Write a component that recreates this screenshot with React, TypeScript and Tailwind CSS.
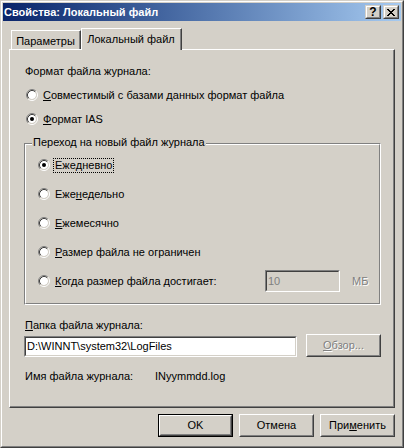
import React from "react";

function Radio({ checked }: { checked?: boolean }) {
  return (
    <svg width="12" height="12" viewBox="0 0 12 12" className="shrink-0 block">
      <circle cx="6" cy="6" r="4" fill="#fff" />
      <path d="M2.11 9.89A5.5 5.5 0 0 1 9.89 2.11" stroke="#808080" fill="none" />
      <path d="M9.89 2.11A5.5 5.5 0 0 1 2.11 9.89" stroke="#fff" fill="none" />
      <path d="M2.82 9.18A4.5 4.5 0 0 1 9.18 2.82" stroke="#404040" fill="none" />
      <path d="M9.18 2.82A4.5 4.5 0 0 1 2.82 9.18" stroke="#D4D0C8" fill="none" />
      {checked && <circle cx="6" cy="6" r="2" fill="#000" />}
    </svg>
  );
}

function Raised({
  className,
  children,
}: {
  className?: string;
  children?: React.ReactNode;
}) {
  return (
    <div
      className={`border border-t-white border-l-white border-r-[#404040] border-b-[#404040] ${className ?? ""}`}
    >
      <div className="h-full w-full border border-t-[#D4D0C8] border-l-[#D4D0C8] border-r-[#808080] border-b-[#808080] flex items-center justify-center">
        {children}
      </div>
    </div>
  );
}

function CapBtn({
  className,
  children,
}: {
  className?: string;
  children?: React.ReactNode;
}) {
  return (
    <div
      className={`w-[16px] h-[14px] bg-[#D4D0C8] border border-t-[#D4D0C8] border-l-[#D4D0C8] border-r-[#404040] border-b-[#404040] ${className ?? ""}`}
    >
      <div className="h-full w-full border border-t-white border-l-white border-r-[#808080] border-b-[#808080] flex items-center justify-center">
        {children}
      </div>
    </div>
  );
}

function Sunken({
  className,
  bg,
  children,
}: {
  className?: string;
  bg: string;
  children?: React.ReactNode;
}) {
  return (
    <div
      className={`border border-t-[#808080] border-l-[#808080] border-r-white border-b-white ${className ?? ""}`}
    >
      <div
        className={`h-full w-full border border-t-[#404040] border-l-[#404040] border-r-[#D4D0C8] border-b-[#D4D0C8] flex items-center pl-px ${bg}`}
      >
        {children}
      </div>
    </div>
  );
}

export default function App() {
  return (
    <div className="w-[404px] h-[448px] bg-[#D4D0C8] border border-t-[#D4D0C8] border-l-[#D4D0C8] border-r-[#404040] border-b-[#404040] text-[11px] leading-[13px] text-black font-['Liberation_Sans',Arial,sans-serif]">
      <div className="h-full border border-t-white border-l-white border-r-[#808080] border-b-[#808080] p-px flex flex-col">
        {/* Title bar */}
        <div className="h-[18px] shrink-0 flex items-center bg-linear-to-r from-[#0A246A] to-[#A6CAF0] pl-px pr-[2px]">
          <span className="flex-1 text-white font-bold whitespace-nowrap">
            Свойства: Локальный файл
          </span>
          <CapBtn>
            <span className="font-bold text-[12px] leading-[10px] text-black">?</span>
          </CapBtn>
          <CapBtn className="ml-[2px]">
            <svg width="8" height="7" viewBox="0 0 8 7" shapeRendering="crispEdges" className="block">
              <path
                fill="#000"
                d="M0 0h2v1H0zM6 0h2v1H6zM1 1h2v1H1zM5 1h2v1H5zM2 2h4v1H2zM3 3h2v1H3zM2 4h4v1H2zM1 5h2v1H1zM5 5h2v1H5zM0 6h2v1H0zM6 6h2v1H6z"
              />
            </svg>
          </CapBtn>
        </div>

        <div className="flex flex-col px-[6px] pt-[7px]">
          {/* Tabs */}
          <div className="flex items-end pl-[2px] h-[21px]">
            <div className="w-[70px] h-[19px] border-t border-l border-r border-t-white border-l-white border-r-[#404040] mb-0">
              <div className="h-full border-r border-r-[#808080] flex justify-center pt-[4px] whitespace-nowrap">
                Параметры
              </div>
            </div>
            <div className="relative z-10 -mb-px w-[101px] h-[22px] bg-[#D4D0C8] border-t border-l border-r border-t-white border-l-white border-r-[#404040]">
              <div className="h-full border-r border-r-[#808080] flex justify-center pt-[4px] whitespace-nowrap">
                Локальный файл
              </div>
            </div>
          </div>

          {/* Panel */}
          <div className="h-[359px] border border-t-white border-l-white border-r-[#404040] border-b-[#404040]">
            <div className="h-full border-r border-b border-r-[#808080] border-b-[#808080] flex flex-col">
              <div className="mt-[13px] h-[16px] pl-[15px] flex items-center">
                Формат файла журнала:
              </div>
              <div className="mt-[8px] h-[16px] pl-[16px] flex items-center">
                <Radio />
                <span className="ml-[5px] whitespace-nowrap">
                  <u>С</u>овместимый с базами данных формат файла
                </span>
              </div>
              <div className="mt-[8px] h-[16px] pl-[16px] flex items-center">
                <Radio checked />
                <span className="ml-[5px] whitespace-nowrap">
                  <u>Ф</u>ормат IAS
                </span>
              </div>

              {/* Group box */}
              <div className="relative mt-[16px] ml-[14px] w-[357px] h-[162px] border border-t-[#808080] border-l-[#808080] border-r-white border-b-white">
                <span className="absolute left-[7px] top-[-8px] px-px bg-[#D4D0C8] whitespace-nowrap">
                  Переход на новый файл журнала
                </span>
                <div className="h-full border border-t-white border-l-white border-r-[#808080] border-b-[#808080] flex flex-col pl-[12px]">
                  <div className="mt-[12px] h-[16px] flex items-center">
                    <Radio checked />
                    <span className="ml-[3px] h-[15px] flex items-center border border-dotted border-black px-px whitespace-nowrap">
                      Еже<u>д</u>невно
                    </span>
                  </div>
                  <div className="mt-[13px] h-[16px] flex items-center">
                    <Radio />
                    <span className="ml-[5px] whitespace-nowrap">
                      Еже<u>н</u>едельно
                    </span>
                  </div>
                  <div className="mt-[13px] h-[16px] flex items-center">
                    <Radio />
                    <span className="ml-[5px] whitespace-nowrap">
                      <u>Е</u>жемесячно
                    </span>
                  </div>
                  <div className="mt-[13px] h-[16px] flex items-center">
                    <Radio />
                    <span className="ml-[5px] whitespace-nowrap">
                      <u>Р</u>азмер файла не ограничен
                    </span>
                  </div>
                  <div className="mt-[10px] h-[22px] flex items-center">
                    <Radio />
                    <span className="ml-[5px] w-[210px] whitespace-nowrap">
                      <u>К</u>огда размер файла достигает:
                    </span>
                    <Sunken className="w-[75px] h-[22px]" bg="bg-[#D4D0C8]">
                      <span className="text-[#808080]">10</span>
                    </Sunken>
                    <span className="ml-[12px] text-[#808080] [text-shadow:1px_1px_0_#fff]">
                      МБ
                    </span>
                  </div>
                </div>
              </div>

              <div className="mt-[12px] h-[16px] pl-[15px] flex items-center">
                <span>
                  <u>П</u>апка файла журнала:
                </span>
              </div>
              <div className="mt-px h-[23px] pl-[14px] flex items-end">
                <Sunken className="w-[273px] h-[21px]" bg="bg-white">
                  <span className="whitespace-nowrap">D:\WINNT\system32\LogFiles</span>
                </Sunken>
                <Raised className="ml-[9px] w-[75px] h-[23px]">
                  <span className="text-[#808080] [text-shadow:1px_1px_0_#fff]">
                    <u>О</u>бзор...
                  </span>
                </Raised>
              </div>
              <div className="mt-[11px] h-[16px] pl-[15px] flex items-center">
                <span className="w-[130px] whitespace-nowrap">Имя файла журнала:</span>
                <span>INyymmdd.log</span>
              </div>
            </div>
          </div>

          {/* Bottom buttons */}
          <div className="mt-[6px] flex justify-end gap-[6px]">
            <div className="w-[75px] h-[23px] border border-black">
              <Raised className="w-full h-full">OK</Raised>
            </div>
            <Raised className="w-[75px] h-[23px]">Отмена</Raised>
            <Raised className="w-[75px] h-[23px]">
              <span>
                При<u>м</u>енить
              </span>
            </Raised>
          </div>
        </div>
      </div>
    </div>
  );
}
